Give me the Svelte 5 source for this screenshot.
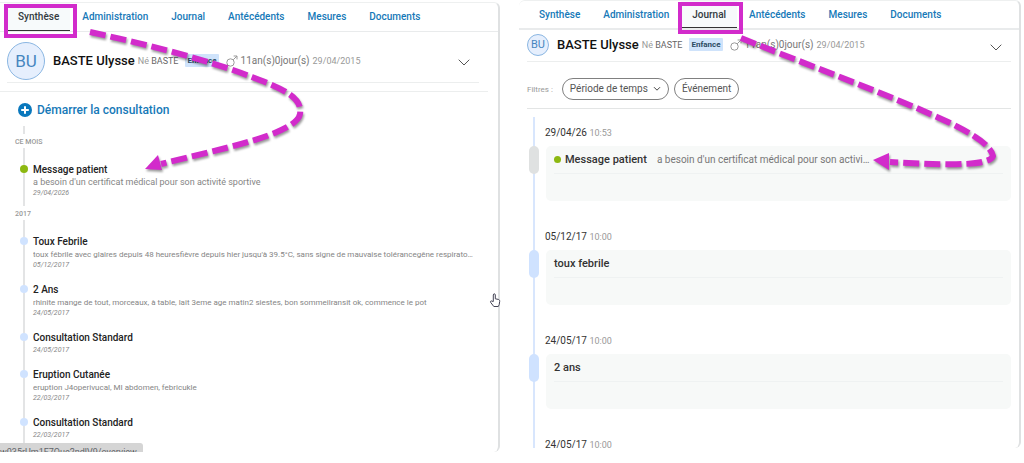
<script lang="ts">
	interface Entry {
		title: string;
		text?: string;
		date: string;
		active?: boolean;
	}

	interface JournalEntry {
		date: string;
		time: string;
		title: string;
		text?: string;
		active?: boolean;
	}

	const tabs = ['Synthèse', 'Administration', 'Journal', 'Antécédents', 'Mesures', 'Documents'];

	const groups: { label: string; entries: Entry[] }[] = [
		{
			label: 'CE MOIS',
			entries: [
				{
					title: 'Message patient',
					text: "a besoin d'un certificat médical pour son activité sportive",
					date: '29/04/2026',
					active: true
				}
			]
		},
		{
			label: '2017',
			entries: [
				{
					title: 'Toux Febrile',
					text: "toux fébrile avec glaires depuis 48 heuresfièvre depuis hier jusqu'à 39.5°C, sans signe de mauvaise tolérancegêne respiratoire",
					date: '05/12/2017'
				},
				{
					title: '2 Ans',
					text: 'rhinite mange de tout, morceaux, à table, lait 3eme age matin2 siestes, bon sommeilransit ok, commence le pot',
					date: '24/05/2017'
				},
				{ title: 'Consultation Standard', date: '24/05/2017' },
				{
					title: 'Eruption Cutanée',
					text: 'eruption J4operivucal, MI abdomen, febricukle',
					date: '22/03/2017'
				},
				{ title: 'Consultation Standard', date: '22/03/2017' }
			]
		}
	];

	const journal: JournalEntry[] = [
		{
			date: '29/04/26',
			time: '10:53',
			title: 'Message patient',
			text: "a besoin d'un certificat médical pour son activité sportive",
			active: true
		},
		{ date: '05/12/17', time: '10:00', title: 'toux febrile' },
		{ date: '24/05/17', time: '10:00', title: '2 ans' },
		{ date: '24/05/17', time: '10:00', title: 'consultation standard' }
	];
</script>

{#snippet tabBar(current: string)}
	<nav class="tabs">
		{#each tabs as tab}
			<a href="#{tab}" class="tab" class:current={tab === current}>{tab}</a>
		{/each}
	</nav>
{/snippet}

{#snippet patient()}
	<header class="patient">
		<span class="avatar">BU</span>
		<h1>BASTE Ulysse</h1>
		<span class="birth">Né <b>BASTE</b></span>
		<span class="tag">Enfance</span>
		<span class="age">
			<svg class="male" viewBox="0 0 12 12" aria-hidden="true">
				<circle cx="4.5" cy="7.5" r="3.7" />
				<path d="M7.2 4.8 11 1M7.6 1H11v3.4" />
			</svg>
			11an(s)0jour(s)
			<small>29/04/2015</small>
		</span>
		<button class="toggle" aria-label="Détails du patient">
			<svg viewBox="0 0 12 7" aria-hidden="true"><path d="m.7.7 5.3 5.3L11.3.7" /></svg>
		</button>
	</header>
{/snippet}

<div class="page">
	<section class="panel summary">
		{@render tabBar('Synthèse')}
		{@render patient()}
		<div class="content">
			<button class="start">
				<svg viewBox="0 0 14 14" aria-hidden="true">
					<circle cx="7" cy="7" r="7" fill="#0a78bd" />
					<path d="M7 3.2v7.6M3.2 7h7.6" stroke="#fff" stroke-width="2" />
				</svg>
				Démarrer la consultation
			</button>
			<div class="stem"></div>
			{#each groups as group}
				<h2>{group.label}</h2>
				<ul class="events">
					{#each group.entries as entry}
						<li class:active={entry.active}>
							<span class="dot"></span>
							<div class="event">
								<h3>{entry.title}</h3>
								{#if entry.text}
									<p>{entry.text}</p>
								{/if}
								<time>{entry.date}</time>
							</div>
						</li>
					{/each}
				</ul>
			{/each}
		</div>
		<div class="status">w035rUm1F7Que2ndlV9/overview</div>
	</section>

	<section class="panel journal">
		{@render tabBar('Journal')}
		{@render patient()}
		<div class="filters">
			<span>Filtres :</span>
			<button>
				Période de temps
				<svg viewBox="0 0 8 6" aria-hidden="true"><path d="m1 1.2 3 3 3-3" /></svg>
			</button>
			<button>Événement</button>
		</div>
		<ol class="log">
			{#each journal as item}
				<li>
					<div class="when">{item.date} <small>{item.time}</small></div>
					<div class="row">
						<span class="marker" class:muted={item.active}></span>
						<article>
							<div class="card-head">
								{#if item.active}
									<span class="bullet"></span>
								{/if}
								<h3>{item.title}</h3>
								{#if item.text}
									<p>{item.text}</p>
								{/if}
							</div>
						</article>
					</div>
				</li>
			{/each}
		</ol>
	</section>

	<svg class="overlay" viewBox="0 0 1024 463" aria-hidden="true">
		<g class="frames">
			<rect x="6" y="6" width="69" height="30" />
			<rect x="680" y="4" width="61" height="28" />
		</g>
		<g class="arrows">
			<path d="M90 32C150 45 214 62 252 77C281 88 303 97 300 114C296 135 215 150 161 164" />
			<path d="M741 38C800 62 895 97 948 122C975 135 991 146 993 156C989 168 930 164 890 162" />
			<path class="head" d="M145 169 158 155 162 170Z" />
			<path class="head" d="M873 160 889 153V170Z" />
		</g>
		<path
			class="hand"
			d="M493.300 301.500v-6.500c0-1.600 2-1.600 2 0v3.800l3 .6c1.100.3 1.500.9 1.400 2l-.5 3.200-.9 1.900h-4.500l-3.200-4.200c-.5-1.100.6-1.800 1.400-1.100z"
		/>
	</svg>
</div>

<style>
	:global(body) {
		margin: 0;
		background: #fff;
		font-family: Roboto, 'Liberation Sans', sans-serif;
	}

	.page {
		position: relative;
		display: grid;
		grid-template-columns: 500fr 502fr;
		gap: 19px;
		height: 100vh;
		padding-right: 3px;
		box-sizing: border-box;
		overflow: hidden;
	}

	h1,
	h2,
	h3,
	p,
	ul,
	ol {
		margin: 0;
		padding: 0;
		list-style: none;
	}

	button {
		padding: 0;
		border: 0;
		background: none;
		font-family: inherit;
	}

	.panel {
		position: relative;
		display: flex;
		flex-direction: column;
		min-width: 0;
		box-sizing: border-box;
		overflow: hidden;
		border-right: 2px solid #dfe1e2;
		border-top: 1px solid #eef0f0;
	}

	.summary {
		margin: 2px 0 11px;
		border-radius: 0 6px 6px 0;
	}

	.journal {
		margin-bottom: 15px;
		border-radius: 6px 6px 6px 0;
	}

	/* Tabs */
	.tabs {
		display: flex;
		flex: none;
		gap: 1px;
		padding: 0 7px;
		border-bottom: 1px solid #e9ebec;
	}

	.tab {
		padding: 0 11px;
		color: #1679b8;
		font-size: 10px;
		font-weight: 500;
		line-height: 28px;
		text-decoration: none;
	}

	.tab.current {
		color: #333a40;
		background: #f7fafb;
		box-shadow: inset 0 -1px #333;
	}

	.journal .tabs {
		padding: 0 9px;
		border-bottom-width: 2px;
	}

	.journal .tab {
		line-height: 27px;
	}

	/* Patient header */
	.patient {
		display: flex;
		flex: none;
		align-items: center;
		box-sizing: border-box;
		height: 51px;
		margin: 0 19px 0 7px;
		padding-top: 7px;
		border-bottom: 1px solid #eceeee;
		color: #777;
		font-size: 10px;
	}

	.journal .patient {
		height: 32px;
		margin: 0 8px;
		padding: 0 0 2px;
	}

	.avatar {
		display: grid;
		place-items: center;
		box-sizing: border-box;
		width: 38px;
		height: 38px;
		border: 1px solid #8ab6e2;
		border-radius: 50%;
		background: #e6effd;
		color: #4686bf;
		font-size: 17px;
	}

	.journal .avatar {
		width: 22px;
		height: 22px;
		font-size: 11px;
	}

	h1 {
		margin: 0 3px 0 8px;
		color: #111;
		font-size: 13px;
		font-weight: 500;
	}

	.birth {
		color: #999;
		font-size: 9px;
	}

	.birth b {
		color: #666;
		font-weight: 400;
	}

	.tag {
		margin: 0 7px;
		padding: 0 2px;
		border-radius: 1px;
		background: #cfe3fb;
		color: #2b4a63;
		font-size: 8px;
		font-weight: 700;
		line-height: 13px;
	}

	.age {
		display: flex;
		align-items: center;
		gap: 3px;
	}

	.age small {
		color: #999;
		font-size: 9px;
	}

	.male {
		width: 12px;
		fill: none;
		stroke: #999;
	}

	.toggle {
		display: flex;
		margin: 4px 9px 0 auto;
	}

	.journal .toggle {
		margin-top: 6px;
	}

	.toggle svg {
		width: 12px;
		fill: none;
		stroke: #555;
	}

	/* Summary timeline */
	.content {
		flex: 1;
		min-height: 0;
		margin: 8px 10px 0 0;
		border-top: 1px solid #eceeee;
	}

	.start {
		display: flex;
		align-items: center;
		gap: 5px;
		margin: 10px 0 0 18px;
		color: #1679b8;
		font-size: 12px;
		font-weight: 500;
		line-height: 16px;
	}

	.start svg {
		width: 14px;
	}

	.stem {
		width: 2px;
		height: 8px;
		margin: 8px 0 2px 23px;
		background: #e3e4e5;
	}

	h2 {
		margin-left: 15px;
		color: #999;
		font-size: 7px;
		font-weight: 500;
		line-height: 12px;
	}

	.events {
		display: flex;
		flex-direction: column;
		gap: 12px;
		margin: 0 14px 2px 23px;
		padding: 15px 0 7px;
		border-left: 2px solid #e3e4e5;
	}

	.events li {
		display: flex;
		gap: 5px;
	}

	.dot {
		flex: none;
		width: 8px;
		height: 8px;
		margin: 2px 0 0 -5px;
		border-radius: 50%;
		background: #d0e3ff;
	}

	.active .dot,
	.bullet {
		background: #8cb811;
	}

	.event {
		min-width: 0;
	}

	.event h3 {
		color: #222;
		font-size: 10px;
		font-weight: 500;
		line-height: 14px;
	}

	.event p {
		overflow: hidden;
		color: #858585;
		font-size: 8px;
		line-height: 11px;
		text-overflow: ellipsis;
		white-space: nowrap;
	}

	.active .event p {
		font-size: 9px;
	}

	.event time {
		display: block;
		color: #888;
		font-size: 7px;
		font-style: italic;
		line-height: 11px;
	}

	.status {
		position: absolute;
		bottom: 0;
		left: 0;
		height: 9px;
		padding: 0 6px 0 0;
		overflow: hidden;
		border-radius: 0 3px 0 0;
		background: #d5d5d5;
		color: #5f6368;
		font-size: 9px;
		line-height: 18px;
	}

	/* Journal */
	.filters {
		display: flex;
		flex: none;
		align-items: center;
		gap: 5px;
		margin: 0 8px;
		padding: 16px 0 8px;
		border-bottom: 1px solid #e3e5e5;
		color: #999;
		font-size: 8px;
	}

	.filters span {
		margin-right: 4px;
	}

	.filters button {
		display: flex;
		align-items: center;
		gap: 5px;
		padding: 0 7px;
		border: 1px solid #808080;
		border-radius: 11px;
		color: #555;
		font-size: 10px;
		line-height: 20px;
	}

	.filters svg {
		width: 8px;
		fill: none;
		stroke: #444;
	}

	.log {
		flex: 1;
		min-height: 0;
		margin: 8px 8px 0 14px;
		border-left: 2px solid #d8e6fd;
	}

	.log li {
		display: flex;
		flex-direction: column;
		gap: 6px;
		height: 104px;
	}

	.when {
		padding: 9px 0 0 10px;
		color: #333;
		font-size: 10px;
		line-height: 14px;
	}

	.when small {
		color: #999;
		font-size: 9px;
	}

	.row {
		display: flex;
		gap: 7px;
	}

	.marker {
		flex: none;
		width: 10px;
		height: 28px;
		margin-left: -6px;
		border-radius: 5px;
		background: #cfe2ff;
	}

	.marker.muted {
		background: #dfe1e1;
	}

	article {
		flex: 1;
		min-width: 0;
		box-sizing: border-box;
		height: 55px;
		padding: 0 8px;
		border-radius: 5px;
		background: #f7f9f8;
	}

	.card-head {
		display: flex;
		align-items: center;
		gap: 4px;
		border-bottom: 1px solid #eff2f2;
		line-height: 27px;
	}

	.bullet {
		flex: none;
		width: 7px;
		height: 7px;
		border-radius: 50%;
	}

	.card-head h3 {
		color: #333;
		font-size: 11px;
		font-weight: 500;
	}

	.card-head p {
		margin-left: 6px;
		width: 215px;
		overflow: hidden;
		color: #777;
		font-size: 10px;
		text-overflow: ellipsis;
		white-space: nowrap;
	}

	/* Annotations */
	.overlay {
		position: absolute;
		top: 0;
		left: 0;
		width: 100%;
		pointer-events: none;
	}

	.frames {
		fill: none;
		stroke: #d22bcb;
		stroke-width: 4;
	}

	.arrows {
		fill: none;
		stroke: #d22bcb;
		stroke-width: 6;
		stroke-dasharray: 16 5;
		filter: drop-shadow(1px 2px 1px rgb(0 0 0 / 40%));
	}

	.head {
		fill: #d22bcb;
		stroke: none;
	}

	.hand {
		fill: #fff;
		stroke: #445;
	}
</style>
